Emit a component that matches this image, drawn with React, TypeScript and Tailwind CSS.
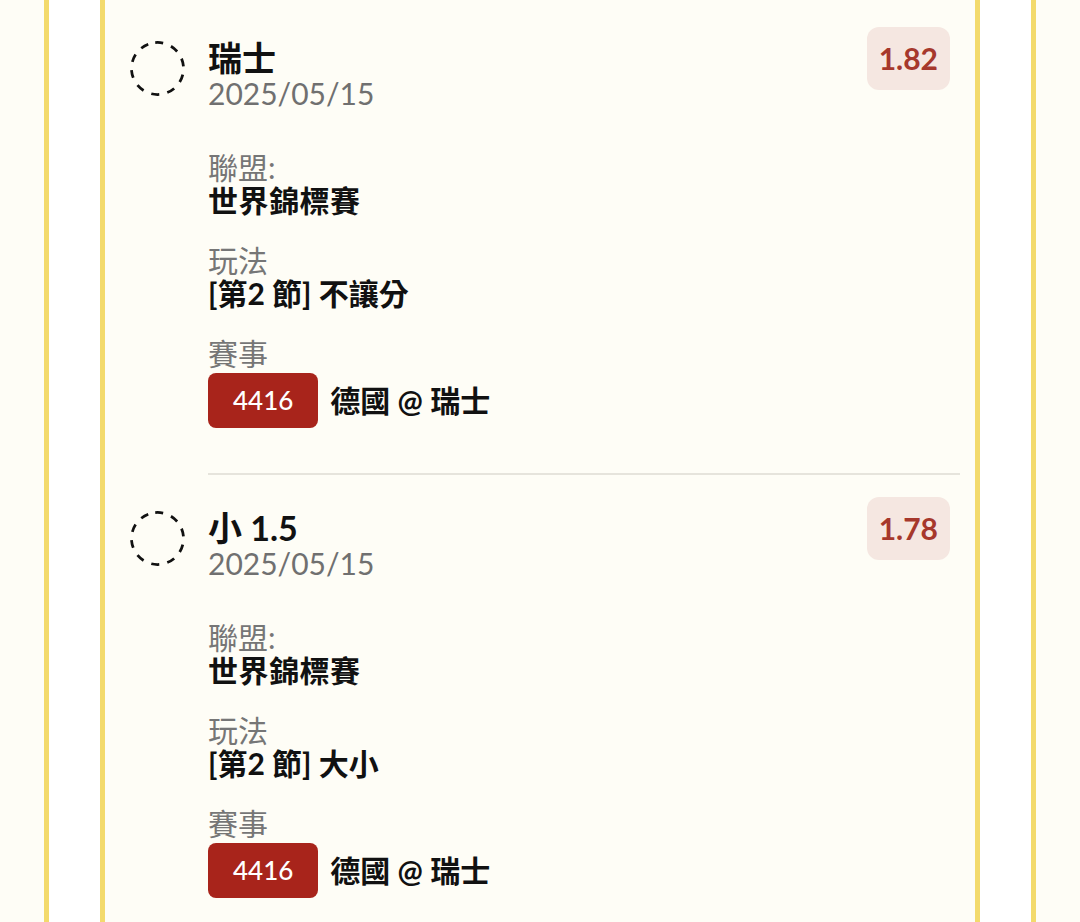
const bets = [
  {
    id: 1,
    pick: "瑞士",
    date: "2025/05/15",
    odds: "1.82",
    league: "世界錦標賽",
    market: "[第2 節] 不讓分",
    code: "4416",
    match: "德國 @ 瑞士",
  },
  {
    id: 2,
    pick: "小 1.5",
    date: "2025/05/15",
    odds: "1.78",
    league: "世界錦標賽",
    market: "[第2 節] 大小",
    code: "4416",
    match: "德國 @ 瑞士",
  },
];

const DashedCircle = () => (
  <svg width="55" height="55" viewBox="0 0 55 55" className="shrink-0">
    <circle
      cx="27.5"
      cy="27.5"
      r="26"
      fill="none"
      stroke="#111"
      strokeWidth="2.75"
      strokeDasharray="8 8.34"
      transform="rotate(-95 27.5 27.5)"
    />
  </svg>
);

const App = () => {
  return (
    <div
      className="h-[922px] overflow-hidden bg-[#fefdf6] px-[44px]"
      style={{ fontFamily: "Lato, 'Noto Sans CJK TC', sans-serif" }}
    >
      <div className="h-full border-x-[5px] border-[#f3da6c] bg-white px-[51px]">
        <div className="h-full border-x-[5px] border-[#f3da6c] bg-[#fefdf6] pl-[25px] pr-[15px]">
          {bets.map((bet, index) => (
            <div
              key={bet.id}
              className={`flex gap-[23px] ${index === 0 ? "pt-[27px]" : "pt-[22px]"}`}
            >
              <div className="pt-[14px]">
                <DashedCircle />
              </div>

              <div className="flex-1 border-b-2 border-[#e6e4dc] pb-[45px]">
                {/* Header */}
                <div className="flex items-start justify-between pr-[10px]">
                  <div className="pt-[13px]">
                    <div className="text-[34px] leading-[36px] font-bold text-[#111]">
                      {bet.pick}
                    </div>
                    <div className="text-[30px] leading-[34px] text-[#707070]">
                      {bet.date}
                    </div>
                  </div>
                  <div className="flex h-[63px] items-center rounded-[12px] bg-[#f5e7e1] px-[12px] text-[30px] font-bold text-[#a6382c]">
                    {bet.odds}
                  </div>
                </div>

                {/* Details */}
                <div className="mt-[41px] flex flex-col gap-[27px]">
                  <div>
                    <div className="text-[30px] leading-[33px] text-[#767676]">聯盟:</div>
                    <div className="text-[30px] leading-[33px] font-bold tracking-[0.5px] text-[#111]">
                      {bet.league}
                    </div>
                  </div>
                  <div>
                    <div className="text-[30px] leading-[33px] text-[#767676]">玩法</div>
                    <div className="text-[30px] leading-[33px] font-bold text-[#111]">
                      {bet.market}
                    </div>
                  </div>
                  <div>
                    <div className="text-[30px] leading-[33px] text-[#767676]">賽事</div>
                    <div className="mt-[3px] flex items-center gap-[12px]">
                      <span className="flex h-[55px] items-center rounded-[8px] bg-[#a8241b] px-[25px] text-[26px] font-medium text-white">
                        {bet.code}
                      </span>
                      <span className="text-[30px] font-bold text-[#111]">{bet.match}</span>
                    </div>
                  </div>
                </div>
              </div>
            </div>
          ))}
        </div>
      </div>
    </div>
  );
};

export default App;
